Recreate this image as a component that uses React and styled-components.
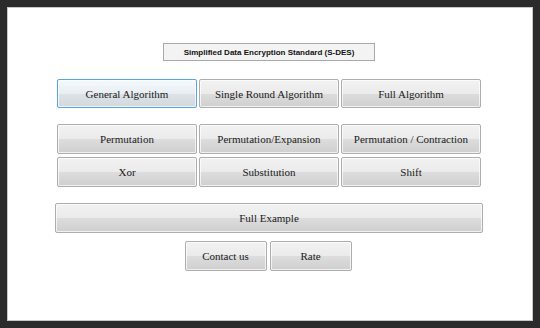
import React from "react";
import styled, { createGlobalStyle, css } from "styled-components";

const Global = createGlobalStyle`
  html, body { margin: 0; padding: 0; background: #2b2b2b; }
  body { width: 540px; height: 328px; overflow: hidden; }
`;

const Frame = styled.div`
  width: 540px;
  height: 328px;
  box-sizing: border-box;
  padding: 7px;
  background: #2b2b2b;
`;

const Panel = styled.div`
  width: 526px;
  height: 314px;
  box-sizing: border-box;
  background: #ffffff;
  border: 1px solid #c8c8c8;
  display: flex;
  flex-direction: column;
  align-items: center;
  padding-top: 35px;
  padding-right: 2px;
`;

const Title = styled.div`
  width: 212px;
  height: 18px;
  box-sizing: border-box;
  border: 1px solid #a9a9a9;
  background: #f3f3f3;
  font-family: "Liberation Sans", Arial, sans-serif;
  font-weight: bold;
  font-size: 8px;
  color: #111;
  display: flex;
  align-items: center;
  justify-content: center;
`;

const Grid = styled.div`
  display: grid;
  grid-template-columns: repeat(3, 140px);
  column-gap: 2px;
  row-gap: ${(p) => p.$rowGap}px;
  margin-top: ${(p) => p.$top}px;
`;

const Btn = styled.button`
  width: ${(p) => p.$w || 140}px;
  height: ${(p) => p.$h || 30}px;
  box-sizing: border-box;
  margin: 0;
  padding: 0;
  border: 1px solid #adadad;
  border-radius: 2px;
  font-family: "Liberation Serif", "Times New Roman", serif;
  font-size: 11px;
  color: #1a1a1a;
  background: linear-gradient(
    to bottom,
    #f2f2f2 0%,
    #ebebeb 50%,
    #dddddd 50%,
    #cfcfcf 100%
  );
  box-shadow: inset 0 0 0 1px rgba(255, 255, 255, 0.7);
  display: flex;
  align-items: center;
  justify-content: center;
  ${(p) =>
    p.$active &&
    css`
      border-color: #5aa6da;
      background: linear-gradient(
        to bottom,
        #f4f9fd 0%,
        #e9eef2 50%,
        #dde3e8 50%,
        #d2d8dc 100%
      );
    `}
`;

const Wide = styled(Btn)`
  margin-top: 16px;
`;

const Pair = styled.div`
  display: flex;
  gap: 3px;
  margin-top: 8px;
  margin-right: 2px;
`;

export default function App() {
  return (
    <>
      <Global />
      <Frame>
        <Panel>
          <Title>Simplified Data Encryption Standard (S-DES)</Title>
          <Grid $top={18} $rowGap={3}>
            <Btn $active $h={29}>General Algorithm</Btn>
            <Btn $h={29}>Single Round Algorithm</Btn>
            <Btn $h={29}>Full Algorithm</Btn>
          </Grid>
          <Grid $top={16} $rowGap={3}>
            <Btn>Permutation</Btn>
            <Btn>Permutation/Expansion</Btn>
            <Btn>Permutation / Contraction</Btn>
            <Btn>Xor</Btn>
            <Btn>Substitution</Btn>
            <Btn>Shift</Btn>
          </Grid>
          <Wide $w={428} $h={30}>Full Example</Wide>
          <Pair>
            <Btn $w={82} $h={30}>Contact us</Btn>
            <Btn $w={82} $h={30}>Rate</Btn>
          </Pair>
        </Panel>
      </Frame>
    </>
  );
}
